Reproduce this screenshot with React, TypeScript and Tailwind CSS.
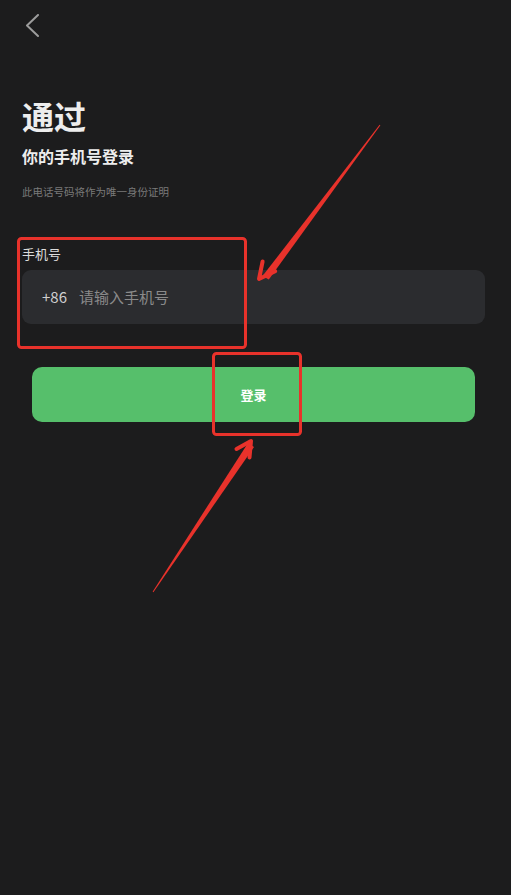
const font = { fontFamily: '"Noto Sans CJK SC", "Noto Sans", sans-serif' };

const Annotations = () => (
  <svg
    className="pointer-events-none absolute left-0 top-0"
    width="511"
    height="895"
    viewBox="0 0 511 895"
    fill="none"
  >
    {/* boxes */}
    <rect x="18.5" y="238.5" width="227" height="109" rx="3" stroke="#e8322b" strokeWidth="3" />
    <rect x="213.5" y="353.5" width="87" height="81" rx="3" stroke="#e8322b" strokeWidth="3" />
    {/* arrow to phone field */}
    <polygon points="380.4,125.3 379.6,124.7 262.5,276.1 268.8,279.5" fill="#e8322b" />
    <polyline points="262.6,261.5 259,279 275.2,271.3" stroke="#e8322b" strokeWidth="4" strokeLinecap="round" strokeLinejoin="round" />
    {/* arrow to login button */}
    <polygon points="152.6,591.7 153.4,592.3 254,447 248,443" fill="#e8322b" />
    <polyline points="236.5,449 251,441 249.5,457.5" stroke="#e8322b" strokeWidth="4" strokeLinecap="round" strokeLinejoin="round" />
  </svg>
);

export default function App() {
  return (
    <div className="relative min-h-[895px] w-full bg-[#1c1c1d] pl-[22px] pr-[26px] pt-[14px]" style={font}>
      <button className="ml-[3px] block">
        <svg width="14" height="24" viewBox="0 0 14 24" fill="none">
          <polyline points="13,1 2,11.5 13,22" stroke="#9c9c9c" strokeWidth="2" strokeLinecap="round" strokeLinejoin="round" />
        </svg>
      </button>

      <h1 className="mt-[58px] text-[32px] font-bold leading-[38px] text-[#ededed]">通过</h1>
      <h2 className="mt-[11px] text-[16px] font-bold leading-[22px] text-[#ededed]">你的手机号登录</h2>
      <p className="mt-[17px] text-[10.5px] leading-[16px] text-[#7a7a7a]">此电话号码将作为唯一身份证明</p>

      <label className="mt-[45px] block text-[13px] leading-[18px] text-[#dcdcdc]">手机号</label>
      <div className="mt-[7px] flex h-[54px] items-center rounded-[9px] bg-[#2b2c2f] pl-[20px]">
        <span className="text-[15px] text-[#cfcfcf]">+86</span>
        <span className="ml-[12px] text-[15px] text-[#8a8a8a]">请输入手机号</span>
      </div>

      <div className="mt-[43px] pl-[10px] pr-[10px]">
        <button className="flex h-[55px] w-[443px] items-center justify-center rounded-[10px] bg-[#56bf6b] text-[13px] font-bold text-white">
          登录
        </button>
      </div>

      <Annotations />
    </div>
  );
}
